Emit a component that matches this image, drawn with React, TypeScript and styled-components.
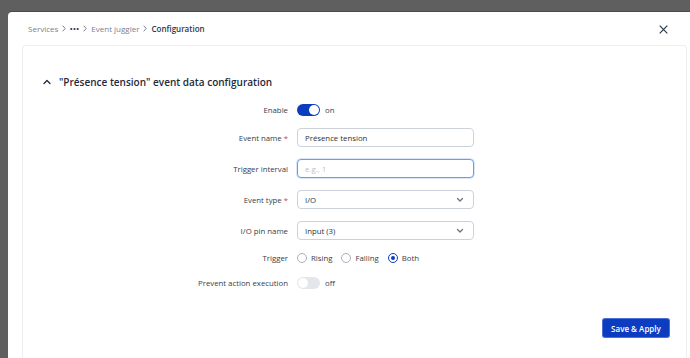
import React, { useState } from 'react'
import styled, { createGlobalStyle } from 'styled-components'

const GlobalStyle = createGlobalStyle`
  html, body {
    margin: 0;
    padding: 0;
    background: #5f5f5f;
    overflow: hidden;
  }
  body {
    font-family: "Open Sans", "Noto Sans", sans-serif;
  }
`

const Page = styled.div`
  height: 358px;
  padding: 12px 0 0 8px;
  box-sizing: border-box;
`

const Modal = styled.div`
  height: 100%;
  background: #fff;
  border-top-left-radius: 4px;
  padding: 0 3px 0 14px;
  display: flex;
  flex-direction: column;
  box-shadow: 0 -1px 0 #4a4a4a;
`

const Header = styled.div`
  height: 33px;
  display: flex;
  align-items: center;
  justify-content: space-between;
  padding: 0 19px 0 6px;
`

const Crumbs = styled.nav`
  display: flex;
  align-items: center;
  gap: 4px;
  font-size: 8px;
`

const Crumb = styled.span<{ $current?: boolean }>`
  color: ${(p) => (p.$current ? '#2d3748' : '#7a8190')};
  font-weight: ${(p) => (p.$current ? 600 : 400)};
`

const CloseBtn = styled.button`
  border: 0;
  background: none;
  padding: 0;
  margin-top: 2px;
  width: 9px;
  height: 9px;
  display: flex;
`

const Card = styled.section`
  flex: 1;
  border: 1px solid #eceef2;
  border-bottom: 0;
  border-radius: 4px 4px 0 0;
  display: flex;
  flex-direction: column;
`

const Title = styled.h2`
  margin: 28px 0 0 20px;
  display: flex;
  align-items: center;
  gap: 8px;
  font-size: 10px;
  font-weight: 600;
  color: #1f2a3c;
  line-height: 16px;
`

const Form = styled.div`
  margin-top: 7px;
  display: flex;
  flex-direction: column;
`

const Row = styled.div<{ $h: number }>`
  height: ${(p) => p.$h}px;
  display: grid;
  grid-template-columns: 265px 177px;
  column-gap: 9px;
  align-items: center;
`

const Label = styled.label`
  text-align: right;
  font-size: 7.8px;
  color: #353d4c;
`

const Req = styled.span`
  color: #e2383f;
  margin-left: 2px;
`

const Field = styled.div`
  display: flex;
  align-items: center;
  gap: 5px;
  font-size: 7.8px;
  color: #353d4c;
`

const Input = styled.input<{ $focus?: boolean }>`
  width: 100%;
  height: 19px;
  box-sizing: border-box;
  border: 1px solid ${(p) => (p.$focus ? '#6f9be8' : '#cdd2da')};
  box-shadow: ${(p) => (p.$focus ? '0 0 0 1px #dbe6fb' : 'none')};
  border-radius: 4px;
  padding: 0 7px;
  font-family: inherit;
  font-size: 7.8px;
  color: #2b3340;
  outline: none;
  &::placeholder {
    color: #b9bfc9;
  }
`

const Select = styled.div`
  width: 100%;
  height: 19px;
  box-sizing: border-box;
  border: 1px solid #cdd2da;
  border-radius: 4px;
  padding: 0 9px 0 7px;
  display: flex;
  align-items: center;
  justify-content: space-between;
  font-size: 7.8px;
  color: #2b3340;
`

const Track = styled.span<{ $on: boolean }>`
  width: 23px;
  height: 12px;
  border-radius: 6px;
  background: ${(p) => (p.$on ? '#0c3cc0' : '#e3e6eb')};
  display: flex;
  align-items: center;
  justify-content: ${(p) => (p.$on ? 'flex-end' : 'flex-start')};
  padding: 0 1px;
  box-sizing: border-box;
  &::after {
    content: '';
    width: 10px;
    height: 10px;
    border-radius: 50%;
    background: #fff;
  }
`

const Radios = styled.div`
  display: flex;
  align-items: center;
  gap: 9px;
  font-size: 7.8px;
  color: #353d4c;
`

const RadioItem = styled.span`
  display: flex;
  align-items: center;
  gap: 4px;
`

const Dot = styled.span<{ $checked: boolean }>`
  width: 10px;
  height: 10px;
  box-sizing: border-box;
  border-radius: 50%;
  border: 1px solid ${(p) => (p.$checked ? '#0c3cc0' : '#a9b0bb')};
  display: flex;
  align-items: center;
  justify-content: center;
  &::after {
    content: '';
    width: 4px;
    height: 4px;
    border-radius: 50%;
    background: ${(p) => (p.$checked ? '#0c3cc0' : 'transparent')};
  }
`

const Footer = styled.div`
  margin-top: 23px;
  display: flex;
  justify-content: flex-end;
  padding-right: 17px;
`

const SaveBtn = styled.button`
  width: 66px;
  height: 18px;
  border: 0;
  border-radius: 2px;
  background: #0c3cc0;
  box-shadow: 0 0 0 1px #4e6fd6;
  color: #fff;
  font-family: inherit;
  font-size: 8px;
  font-weight: 600;
  padding: 0;
`

const Chevron = ({ up }: { up?: boolean }) => (
  <svg width="8" height="6" viewBox="0 0 8 6" fill="none">
    <path
      d={up ? 'M1 4.5 L4 1.5 L7 4.5' : 'M1.5 1.5 L4 4 L6.5 1.5'}
      stroke={up ? '#1f2a3c' : '#6b7280'}
      strokeWidth="1.3"
      strokeLinecap="round"
      strokeLinejoin="round"
    />
  </svg>
)

const CrumbSep = () => (
  <svg width="4" height="7" viewBox="0 0 4 7" fill="none">
    <path d="M0.7 0.7 L3.2 3.5 L0.7 6.3" stroke="#6b7280" strokeWidth="0.9" />
  </svg>
)

const More = () => (
  <svg width="9" height="4" viewBox="0 0 9 4">
    <circle cx="1.3" cy="2" r="1.1" fill="#2d3748" />
    <circle cx="4.5" cy="2" r="1.1" fill="#2d3748" />
    <circle cx="7.7" cy="2" r="1.1" fill="#2d3748" />
  </svg>
)

function App() {
  const [trigger, setTrigger] = useState('Both')

  return (
    <Page>
      <GlobalStyle />
      <Modal>
        <Header>
          <Crumbs>
            <Crumb>Services</Crumb>
            <CrumbSep />
            <More />
            <CrumbSep />
            <Crumb>Event juggler</Crumb>
            <CrumbSep />
            <Crumb $current>Configuration</Crumb>
          </Crumbs>
          <CloseBtn>
            <svg width="9" height="9" viewBox="0 0 9 9">
              <path d="M0.7 0.7 L8.3 8.3 M8.3 0.7 L0.7 8.3" stroke="#2d3748" strokeWidth="1.2" />
            </svg>
          </CloseBtn>
        </Header>
        <Card>
          <Title>
            <Chevron up />
            "Présence tension" event data configuration
          </Title>
          <Form>
            <Row $h={25}>
              <Label>Enable</Label>
              <Field>
                <Track $on />
                on
              </Field>
            </Row>
            <Row $h={31}>
              <Label>
                Event name<Req>*</Req>
              </Label>
              <Input defaultValue="Présence tension" />
            </Row>
            <Row $h={31}>
              <Label>Trigger interval</Label>
              <Input $focus placeholder="e.g., 1" />
            </Row>
            <Row $h={31}>
              <Label>
                Event type<Req>*</Req>
              </Label>
              <Select>
                I/O
                <Chevron />
              </Select>
            </Row>
            <Row $h={31}>
              <Label>I/O pin name</Label>
              <Select>
                Input (3)
                <Chevron />
              </Select>
            </Row>
            <Row $h={24}>
              <Label>Trigger</Label>
              <Radios>
                {['Rising', 'Falling', 'Both'].map((t) => (
                  <RadioItem key={t} onClick={() => setTrigger(t)}>
                    <Dot $checked={trigger === t} />
                    {t}
                  </RadioItem>
                ))}
              </Radios>
            </Row>
            <Row $h={26}>
              <Label>Prevent action execution</Label>
              <Field>
                <Track $on={false} />
                off
              </Field>
            </Row>
          </Form>
          <Footer>
            <SaveBtn>Save &amp; Apply</SaveBtn>
          </Footer>
        </Card>
      </Modal>
    </Page>
  )
}

export default App
